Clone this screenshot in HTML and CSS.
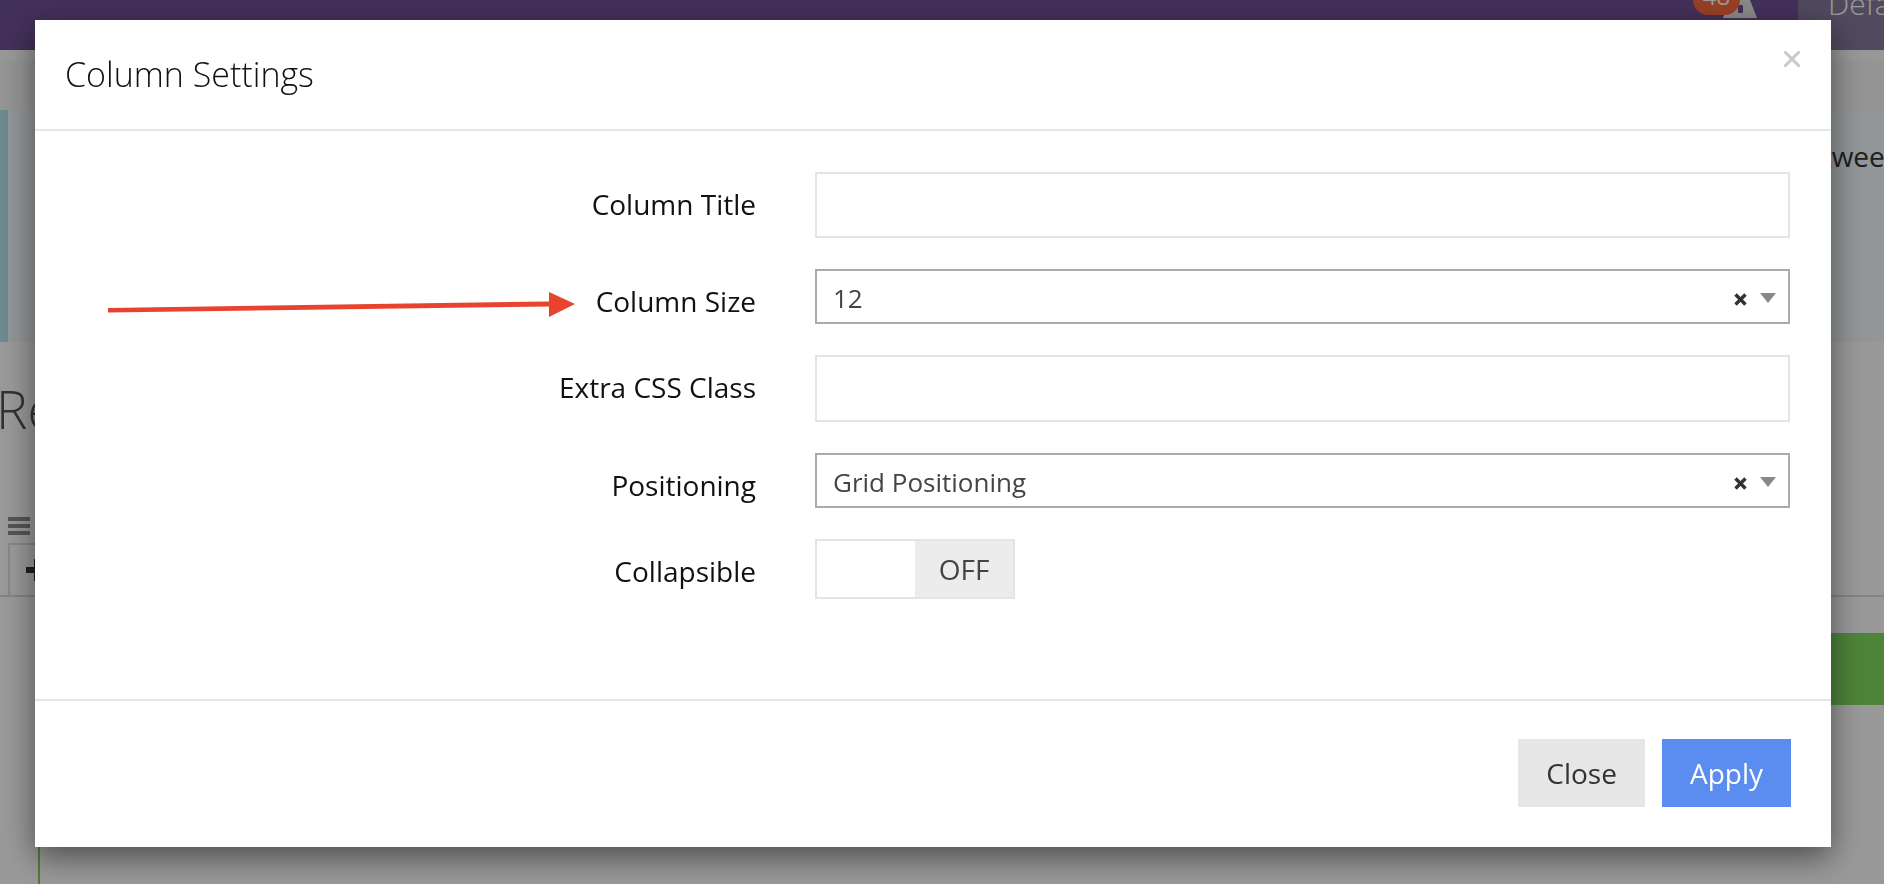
FILE: index.html
```html
<!DOCTYPE html>
<html lang="en">
<head>
<meta charset="utf-8">
<title>Column Settings</title>
<link rel="stylesheet" href="styles.css">
</head>
<body>
<div class="page">
  <header class="topbar">
    <div class="topbar-right">
      <div class="user-icon">
        <svg width="34" height="18" viewBox="0 0 34 18"><polygon points="7,0 27,0 34,18 0,18" fill="#e6e6e6"/><rect x="15" y="5" width="5" height="8" rx="1" fill="#715096"/></svg>
        <span class="badge">48</span>
      </div>
      <div class="lang">Default</div>
    </div>
  </header>
  <div class="subbar"></div>
  <div class="alert">
    <p class="alert-text">Drag and drop to reorder the columns, or move them between</p>
  </div>
  <h1 class="page-title">Rearrange Columns</h1>
  <div class="toolbar">
    <svg class="menu-icon" width="22" height="18" viewBox="0 0 22 18"><rect y="0" width="22" height="4" fill="#8e8e8e"/><rect y="7" width="22" height="4" fill="#8e8e8e"/><rect y="14" width="22" height="4" fill="#8e8e8e"/></svg>
  </div>
  <div class="row-strip">
    <div class="add-box">
      <svg width="22" height="22" viewBox="0 0 22 22"><rect x="8" y="0" width="6" height="22" fill="#333"/><rect x="0" y="8" width="22" height="6" fill="#333"/></svg>
    </div>
  </div>
  <div class="actions">
    <div class="green-btn"></div>
  </div>
  <div class="column-panel"></div>
</div>

<div class="backdrop"></div>

<div class="modal" role="dialog">
  <div class="modal-header">
    <h4 class="modal-title">Column Settings</h4>
    <button class="close" type="button" aria-label="Close">
      <svg width="18" height="18" viewBox="0 0 18 18"><path d="M1.5 1.5 L16.5 16.5 M16.5 1.5 L1.5 16.5" stroke="#c9c9c9" stroke-width="3" fill="none"/></svg>
    </button>
  </div>
  <div class="modal-body">
    <div class="form">
      <div class="form-row">
        <label class="form-label">Column Title</label>
        <input class="text-input h66" type="text">
      </div>
      <div class="form-row">
        <label class="form-label">Column Size</label>
        <div class="select-box">
          <span class="select-value">12</span>
          <svg class="select-clear" width="13" height="13" viewBox="0 0 13 13"><path d="M1.5 1.5 L11.5 11.5 M11.5 1.5 L1.5 11.5" stroke="#333" stroke-width="3.4" fill="none"/></svg>
          <svg class="select-caret" width="16" height="10" viewBox="0 0 16 10"><polygon points="0,0 16,0 8,10" fill="#888"/></svg>
        </div>
      </div>
      <div class="form-row">
        <label class="form-label">Extra CSS Class</label>
        <input class="text-input h67" type="text">
      </div>
      <div class="form-row">
        <label class="form-label">Positioning</label>
        <div class="select-box">
          <span class="select-value">Grid Positioning</span>
          <svg class="select-clear" width="13" height="13" viewBox="0 0 13 13"><path d="M1.5 1.5 L11.5 11.5 M11.5 1.5 L1.5 11.5" stroke="#333" stroke-width="3.4" fill="none"/></svg>
          <svg class="select-caret" width="16" height="10" viewBox="0 0 16 10"><polygon points="0,0 16,0 8,10" fill="#888"/></svg>
        </div>
      </div>
      <div class="form-row">
        <label class="form-label">Collapsible</label>
        <div class="toggle">
          <span class="toggle-on"></span>
          <span class="toggle-off">OFF</span>
        </div>
      </div>
    </div>
  </div>
  <div class="modal-footer">
    <button class="btn btn-default" type="button">Close</button>
    <button class="btn btn-primary" type="button">Apply</button>
  </div>
</div>

<svg class="annotation" width="1884" height="884" viewBox="0 0 1884 884">
  <polygon points="108,308 550,301.5 550,306.5 108,312.5" fill="#e8432f"/>
  <polygon points="549,292 575,304 549,317" fill="#e8432f"/>
</svg>
</body>
</html>
```

FILE: styles.css
```css
html, body {
  margin: 0;
  padding: 0;
}

body {
  width: 1884px;
  height: 884px;
  overflow: hidden;
  font-family: "Open Sans", "Liberation Sans", sans-serif;
  background: #ffffff;
  color: #333;
}

.page {
  width: 1884px;
  height: 884px;
  overflow: hidden;
}

/* ---------- underlying page ---------- */
.topbar {
  height: 50px;
  background: #715096;
  display: flex;
  justify-content: flex-end;
  align-items: flex-start;
  overflow: hidden;
}

.topbar-right {
  display: flex;
  align-items: flex-start;
}

.user-icon {
  position: relative;
  width: 34px;
  height: 18px;
}

.user-icon svg {
  display: block;
}

.badge {
  position: absolute;
  left: -30px;
  top: -16px;
  width: 47px;
  height: 31px;
  border-radius: 16px;
  background: #ff6a40;
  color: #fff;
  font-size: 24px;
  line-height: 23px;
  text-align: center;
}

.lang {
  margin-left: 41px;
  width: 86px;
  height: 50px;
  flex-shrink: 0;
  box-sizing: border-box;
  padding-left: 30px;
  background: #877b9d;
  color: #fff;
  font-size: 30px;
  font-weight: 300;
  line-height: 7px;
  white-space: nowrap;
}

.subbar {
  height: 60px;
  background: #f7f7f7;
  border-top: 10px solid #fdfdfd;
  box-sizing: border-box;
}

.alert {
  height: 232px;
  box-sizing: border-box;
  background: #f3fafd;
  border-left: 8px solid #b1e6f0;
  display: flex;
  justify-content: flex-end;
  padding-top: 27px;
}

.alert-text {
  margin: 0 -18px 0 0;
  font-size: 28px;
  color: #333;
  white-space: nowrap;
}

.page-title {
  margin: 31px 0 0 -4px;
  font-size: 53px;
  font-weight: 300;
  color: #555;
  line-height: 72px;
  white-space: nowrap;
}

.toolbar {
  margin-top: 72px;
  padding-left: 8px;
  height: 18px;
}

.menu-icon {
  display: block;
}

.row-strip {
  margin-top: 8px;
  padding-left: 8px;
  border-bottom: 2px solid #dcdcdc;
}

.add-box {
  width: 70px;
  height: 52px;
  box-sizing: border-box;
  border: 2px solid #e0e0e0;
  border-bottom: 0;
  display: flex;
  align-items: center;
  padding-left: 16px;
}

.add-box svg {
  display: block;
}

.actions {
  margin-top: 36px;
  display: flex;
  justify-content: flex-end;
}

.green-btn {
  width: 300px;
  height: 72px;
  background: #80dc62;
}

.column-panel {
  margin: 20px 0 0 38px;
  height: 300px;
  border-left: 2px solid #7dd35f;
}

/* ---------- backdrop & modal ---------- */
.backdrop {
  position: fixed;
  inset: 0;
  background: rgba(0, 0, 0, 0.4);
}

.modal {
  position: fixed;
  top: 20px;
  left: 35px;
  width: 1796px;
  background: #fff;
  box-shadow: 0 10px 30px rgba(0, 0, 0, 0.5);
  display: flex;
  flex-direction: column;
}

.modal-header {
  height: 111px;
  box-sizing: border-box;
  border-bottom: 2px solid #e5e5e5;
  padding: 0 30px;
  display: flex;
  align-items: center;
  justify-content: space-between;
}

.modal-title {
  margin: 0;
  font-size: 34px;
  font-weight: 300;
  color: #111;
  line-height: normal;
  margin-top: -1px;
}

.close {
  align-self: flex-start;
  margin-top: 30px;
  padding: 0;
  border: 0;
  background: none;
  width: 18px;
  height: 18px;
}

.close svg {
  display: block;
}

.modal-body {
  padding: 41px 41px 100px 30px;
}

.form {
  display: flex;
  flex-direction: column;
  gap: 31px;
}

.form-row {
  display: grid;
  grid-template-columns: 691px 1fr;
  column-gap: 59px;
  align-items: start;
}

.form-label {
  text-align: right;
  font-size: 28px;
  line-height: 40px;
  padding-top: 12px;
  color: #111;
  font-weight: 400;
}

.text-input {
  display: block;
  width: 100%;
  box-sizing: border-box;
  border: 2px solid #e4e4e4;
  border-radius: 0;
  background: #fff;
  margin: 0;
  padding: 0 14px;
  outline: none;
  font-family: inherit;
  font-size: 28px;
}

.h66 { height: 66px; }
.h67 { height: 67px; }

.select-box {
  height: 55px;
  box-sizing: border-box;
  border: 2px solid #ababab;
  display: flex;
  align-items: center;
  padding: 0 12px 0 16px;
}

.select-value {
  flex: 1;
  font-size: 26px;
  color: #444;
  line-height: normal;
  margin-top: 2px;
}

.select-clear {
  display: block;
  margin-top: 5px;
}

.select-caret {
  display: block;
  margin-left: 13px;
  margin-top: 3px;
}

.toggle {
  width: 200px;
  height: 60px;
  box-sizing: border-box;
  border: 2px solid #e4e4e4;
  display: grid;
  grid-template-columns: 1fr 1fr;
}

.toggle-on {
  background: #fff;
}

.toggle-off {
  background: #ececec;
  display: flex;
  align-items: center;
  justify-content: center;
  font-size: 28px;
  color: #444;
}

.modal-footer {
  border-top: 2px solid #e5e5e5;
  padding: 38px 40px 40px;
  display: flex;
  justify-content: flex-end;
  gap: 17px;
}

.btn {
  height: 68px;
  padding: 0 28px;
  border: 0;
  border-radius: 0;
  font-family: inherit;
  font-size: 28px;
  line-height: normal;
}

.btn-default {
  background: #e6e6e6;
  color: #333;
}

.btn-primary {
  background: #5b8cf0;
  color: #fff;
}

.annotation {
  position: fixed;
  left: 0;
  top: 0;
  pointer-events: none;
}
```
